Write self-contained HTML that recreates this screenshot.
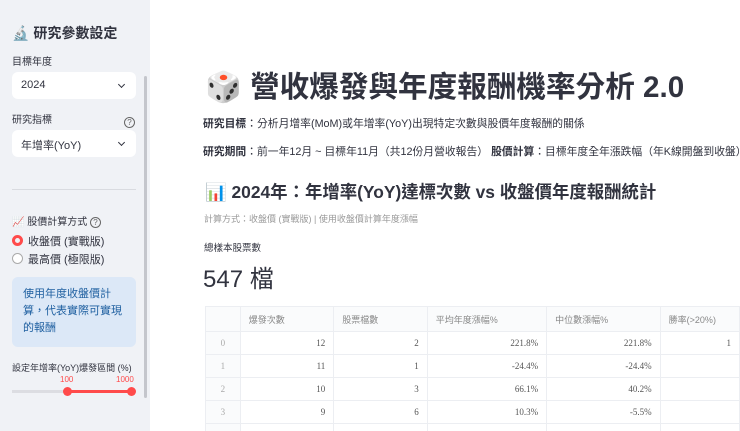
<!DOCTYPE html>
<html><head><meta charset="utf-8"><style>
*{margin:0;padding:0;box-sizing:border-box}
html,body{width:740px;height:431px;overflow:hidden}
body{position:relative;background:#fff;font-family:"Liberation Sans","Noto Sans CJK TC",sans-serif;color:#31333f}
.sb{position:absolute;left:0;top:0;width:150px;height:431px;background:#f0f2f6}
.a{position:absolute;white-space:nowrap}
.sel{position:absolute;left:12px;width:124px;height:27px;background:#fff;border-radius:6px;font-size:11px;padding:7px 9px}
.sel:after{content:"";position:absolute;right:12px;top:10px;width:4px;height:4px;border-right:1.5px solid #31333f;border-bottom:1.5px solid #31333f;transform:rotate(45deg)}
.q{display:inline-block;width:11px;height:11px;border:1px solid #666;border-radius:50%;font-size:8px;text-align:center;line-height:9px;color:#666}
table{position:absolute;left:205px;top:306px;border-collapse:collapse;font-size:9px;color:#555}
td{border:1px solid #eceef2;height:23px;padding:0 8px;text-align:right;font-family:"Liberation Serif","Noto Serif CJK SC",serif}
tr.h td{text-align:left;color:#888;height:25px;background:#fafbfc;font-family:"Liberation Sans","Noto Sans CJK TC",sans-serif}
td.i{color:#aaa;text-align:center;background:#fafbfc}
</style></head><body>
<div class="sb">
<div class="a" style="left:12px;top:23px;font-size:14px;font-weight:bold">🔬 研究參數設定</div>
<div class="a" style="left:12px;top:53px;font-size:10px">目標年度</div>
<div class="sel" style="top:72px">2024</div>
<div class="a" style="left:12px;top:111px;font-size:10px">研究指標</div>
<div class="a" style="left:124px;top:112px"><span class="q">?</span></div>
<div class="sel" style="top:130px;font-size:11px">年增率(YoY)</div>
<div class="a" style="left:12px;top:189px;width:124px;height:1px;background:#d9dbe0"></div>
<div class="a" style="left:12px;top:213px;font-size:10px">📈 股價計算方式 <span class="q">?</span></div>
<div class="a" style="left:12px;top:233px;font-size:11px"><span style="display:inline-block;width:11px;height:11px;border-radius:50%;border:3.5px solid #ff4b4b;vertical-align:-1px;margin-right:5px"></span>收盤價 (實戰版)</div>
<div class="a" style="left:12px;top:251px;font-size:11px"><span style="display:inline-block;width:11px;height:11px;border-radius:50%;border:1px solid #aaa;background:#fff;vertical-align:-1px;margin-right:5px"></span>最高價 (極限版)</div>
<div class="a" style="left:12px;top:277px;width:124px;height:70px;background:#dce8f7;border-radius:6px;color:#1e5fa0;font-size:11px;line-height:17px;padding:9px 11px;white-space:normal">使用年度收盤價計算，代表實際可實現的報酬</div>
<div class="a" style="left:12px;top:361px;font-size:9px">設定年增率(YoY)爆發區間 (%)</div>
<div class="a" style="left:60px;top:375px;font-size:8px;color:#ff4b4b">100</div>
<div class="a" style="left:116px;top:375px;font-size:8px;color:#ff4b4b">1000</div>
<div class="a" style="left:12px;top:390px;width:120px;height:3px;background:#dcdde2"></div>
<div class="a" style="left:67px;top:390px;width:64px;height:3px;background:#ff4b4b"></div>
<div class="a" style="left:63px;top:387px;width:9px;height:9px;border-radius:50%;background:#ff4b4b"></div>
<div class="a" style="left:127px;top:387px;width:9px;height:9px;border-radius:50%;background:#ff4b4b"></div>
<div class="a" style="left:144px;top:76px;width:3px;height:322px;background:#c4c6cc;border-radius:2px"></div>
</div>
<div class="a" style="left:205px;top:63px;font-size:29.6px;font-weight:bold">🎲 營收爆發與年度報酬機率分析 2.0</div>
<div class="a" style="left:203px;top:115px;font-size:10.8px"><b>研究目標</b>：分析月增率(MoM)或年增率(YoY)出現特定次數與股價年度報酬的關係</div>
<div class="a" style="left:203px;top:143px;font-size:10.8px"><b>研究期間</b>：前一年12月 ~ 目標年11月（共12份月營收報告） <b>股價計算</b>：目標年度全年漲跌幅（年K線開盤到收盤）</div>
<div class="a" style="left:205px;top:179px;font-size:17.4px;font-weight:bold">📊 2024年：年增率(YoY)達標次數 vs 收盤價年度報酬統計</div>
<div class="a" style="left:204px;top:212px;font-size:9px;color:#999">計算方式：收盤價 (實戰版) | 使用收盤價計算年度漲幅</div>
<div class="a" style="left:204px;top:240px;font-size:9.5px">總樣本股票數</div>
<div class="a" style="left:203px;top:259px;font-size:24px">547 檔</div>
<table>
<tr class="h"><td class="i" style="width:35px"></td><td style="width:95px">爆發次數</td><td style="width:95px">股票檔數</td><td style="width:121px">平均年度漲幅%</td><td style="width:115px">中位數漲幅%</td><td style="width:80px">勝率(>20%)</td></tr>
<tr><td class="i">0</td><td>12</td><td>2</td><td>221.8%</td><td>221.8%</td><td>1</td></tr>
<tr><td class="i">1</td><td>11</td><td>1</td><td>-24.4%</td><td>-24.4%</td><td></td></tr>
<tr><td class="i">2</td><td>10</td><td>3</td><td>66.1%</td><td>40.2%</td><td></td></tr>
<tr><td class="i">3</td><td>9</td><td>6</td><td>10.3%</td><td>-5.5%</td><td></td></tr>
<tr><td class="i"></td><td></td><td></td><td></td><td></td><td></td></tr>
</table>
</body></html>
